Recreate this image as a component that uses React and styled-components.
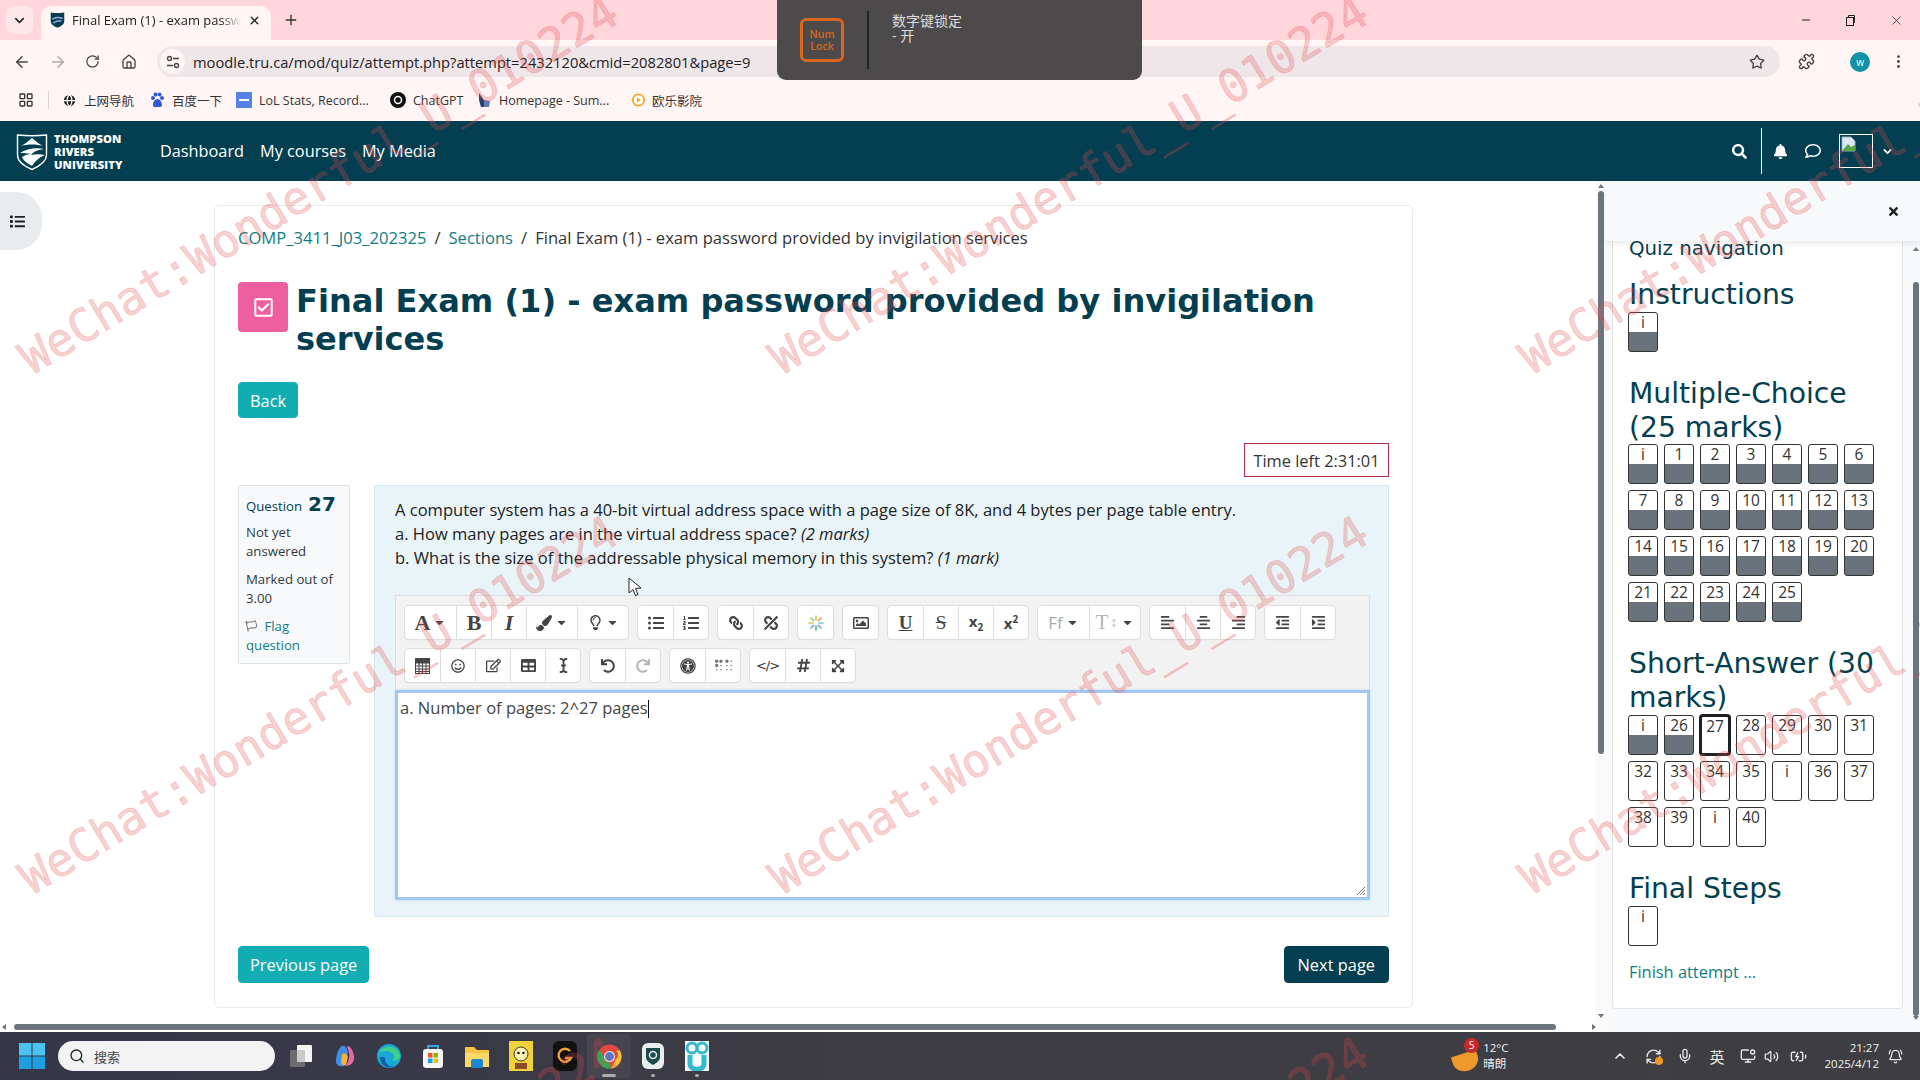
import React from 'react';
import styled, { createGlobalStyle } from 'styled-components';
import { ArrowLeft, ArrowRight, RotateCw, Home, Star, Puzzle, MoreVertical, Minus, X, Plus, ChevronDown, Search, Mic, Volume2, MonitorDot, ChevronUp, RefreshCw, BatteryCharging, BellRing, Globe, LayoutGrid } from 'lucide-react';
import { FaPaintBrush, FaRegLightbulb, FaListUl, FaListOl, FaLink, FaUnlink, FaRegImage, FaAlignLeft, FaAlignCenter, FaAlignRight, FaOutdent, FaIndent, FaRegSmile, FaRegEdit, FaTable, FaICursor, FaUndo, FaRedo, FaUniversalAccess, FaBraille, FaHashtag, FaExpandArrowsAlt, FaSearch, FaBell, FaRegComment, FaList, FaTimes, FaCaretDown, FaRegCheckSquare, FaRegFlag } from 'react-icons/fa';

const SANS = '"Open Sans", "Noto Sans CJK SC", sans-serif';
const VERDANA = '"DejaVu Sans", sans-serif';

const Global = createGlobalStyle`
  html, body { margin: 0; padding: 0; background: #fff; }
  * { box-sizing: border-box; }
  body { font-family: ${SANS}; color: #1d2125; }
`;

const Page = styled.div`
  position: relative; width: 1920px; height: 1080px; overflow: hidden;
  display: flex; flex-direction: column; background: #fff;
`;

/* browser chrome */
const TabStrip = styled.div`
  height: 40px; background: #ffd6dc; display: flex; align-items: flex-end; padding-left: 6px; flex: none;
`;
const TabList = styled.div`
  width: 27px; height: 28px; margin: 0 8px 6px 0; border-radius: 8px; background: #ffe6ea;
  display: flex; align-items: center; justify-content: center; color: #222;
`;
const Tab = styled.div`
  width: 230px; height: 34px; background: #fff5f5; border-radius: 10px 10px 0 0;
  display: flex; align-items: center; padding: 0 10px 6px 9px; gap: 7px;
`;
const TabTitle = styled.span`
  flex: 1; font-size: 13px; color: #222; white-space: nowrap; overflow: hidden;
  mask-image: linear-gradient(90deg, #000 88%, transparent);
`;
const NewTab = styled.div`
  margin: 0 0 12px 12px; color: #333; display: flex;
`;
const WindowControls = styled.div`
  margin-left: auto; display: flex; align-items: center; gap: 33px; padding-right: 16px; align-self: center; color: #222;
`;
const Toolbar = styled.div`
  height: 41px; background: #fff5f5; display: flex; align-items: center; padding: 2px 0 0 13px; flex: none; color: #444;
`;
const NavIcon = styled.span`
  display: flex; width: 36px; color: ${p => p.$muted ? '#aaa' : '#444'};
`;
const AddressBar = styled.div`
  margin-left: 0; width: 1623px; height: 31px; border-radius: 16px; background: #efe6ea;
  display: flex; align-items: center; padding-right: 15px; flex: none;
`;
const TuneChip = styled.span`
  width: 25px; height: 25px; margin: 0 8px 0 3px; border-radius: 50%; background: #fff5f5; display: flex; align-items: center; justify-content: center;
`;
const Url = styled.span`
  font-size: 14.7px; color: #222; flex: 1; white-space: nowrap;
`;
const ToolRight = styled.div`
  display: flex; align-items: center; padding-left: 18px; color: #444;
`;
const Avatar = styled.span`
  width: 20px; height: 20px; border-radius: 50%; background: #0e93a8; color: #fff; font-size: 10px; margin: 0 20px 0 35px;
  display: flex; align-items: center; justify-content: center;
`;
const Bookmarks = styled.div`
  height: 40px; background: #fff5f5; display: flex; align-items: center; padding: 0 0 2px 18px; font-size: 12.5px; color: #333; flex: none;
`;
const BmDivider = styled.span`
  width: 1px; height: 18px; background: #d8cfd2; margin: 0 13px 0 14px;
`;
const Bookmark = styled.span`
  display: flex; align-items: center; gap: 7px; width: ${p => p.$w}px; white-space: nowrap;
`;

/* site nav */
const Navbar = styled.div`
  height: 60px; background: #033f50; display: flex; align-items: center; padding-left: 16px; color: #fff; flex: none;
`;
const LogoBox = styled.div`
  display: flex; align-items: center; gap: 6px; width: 144px;
`;
const LogoText = styled.div`
  font-size: 11.2px; line-height: 13px; font-weight: 800; letter-spacing: .1px; color: #fff;
`;
const NavLink = styled.a`
  font-size: 16.3px; color: #fff; margin: 0 16px 0 0;
`;
const NavRight = styled.div`
  margin-left: auto; display: flex; align-items: center; height: 100%; padding-right: 26px;
`;
const NavSep = styled.span`
  width: 1px; height: 46px; background: #fff; margin: 0 11px 0 14px;
`;
const UserPic = styled.span`
  width: 34px; height: 34px; border: 1px solid #fff; margin: 0 8px 0 18px; display: block; padding: 1px;
`;

/* page body */
const Body = styled.div`
  flex: 1; display: flex; min-height: 0;
`;
const MainPane = styled.div`
  width: 1596px; flex: none; display: flex; flex-direction: column; position: relative;
`;
const Scroller = styled.div`
  flex: 1; padding: 24px 0 0 214px; min-height: 0;
`;
const DrawerToggle = styled.div`
  position: absolute; left: 0; top: 11px; width: 42px; height: 58px; background: #e9ecef;
  border-radius: 0 26px 26px 0; display: flex; align-items: center; justify-content: center; color: #1d2125; padding-right: 8px;
`;
const Card = styled.div`
  width: 1199px; height: 803px; border: 1px solid #e9ebee; border-radius: 5px; padding: 20px 23px;
`;
const Crumbs = styled.div`
  font-size: 16.6px; line-height: 24px; display: flex; gap: 8px; color: #333;
`;
const CrumbLink = styled.a`
  color: #0f7d82;
`;
const Heading = styled.div`
  display: flex; gap: 8px; margin-top: 32px;
`;
const ActivityIcon = styled.div`
  width: 50px; height: 50px; background: #ee5f9f; border-radius: 4px; color: #fff; flex: none;
  display: flex; align-items: center; justify-content: center;
`;
const Title = styled.h1`
  margin: 0; font: bold 32.1px/38px ${VERDANA}; color: #033f50; width: 1090px;
`;
const BackSpacer = styled.div`
  height: 24px;
`;
const TealButton = styled.button`
  background: ${p => p.$dark ? '#033f50' : '#11adb2'}; color: #fff; border: 1px solid ${p => p.$dark ? '#033f50' : '#11adb2'}; border-radius: 4px;
  font: 16.4px ${SANS}; height: ${p => p.$h}px; padding: 0 ${p => p.$dark ? 13 : 11}px; display: block;
`;
const TimerRow = styled.div`
  display: flex; justify-content: flex-end; margin-top: 25px;
`;
const Timer = styled.div`
  width: 145px; height: 34px; border: 1px solid #b3304c; font-size: 16.4px; display: flex; align-items: center; justify-content: center; color: #333;
`;
const QuestionRow = styled.div`
  display: flex; gap: 24px; margin-top: 8px; align-items: flex-start;
`;
const Info = styled.div`
  width: 112px; height: 179px; background: #f8f9fa; border: 1px solid #dee2e6; border-radius: 2px;
  padding: 6px 7px; font-size: 13.2px; color: #33393f;
`;
const InfoNo = styled.div`
  color: #033f50; display: flex; align-items: baseline; gap: 6px; height: 31px;
`;
const InfoNum = styled.b`
  font: bold 20px ${VERDANA};
`;
const InfoP = styled.div`
  line-height: 19px; margin-bottom: 9px; color: ${p => p.$link ? '#0f7d82' : 'inherit'};
`;
const FlagIcon = styled(FaRegFlag)`
  margin-right: 4px; color: #777; transform: rotate(-12deg);
`;
const QBox = styled.div`
  width: 1015px; height: 432px; background: #e8f4f8; border: 1px solid #d5e7eb; border-radius: 2px; padding: 12px 16px 0 20px;
`;
const QText = styled.div`
  font-size: 16.55px; line-height: 24px; color: #222; margin-bottom: 25px;
`;
const EditorWrap = styled.div`
  width: 975px;
`;
const EdToolbar = styled.div`
  height: 95px; background: #f2f2f2; border: 1px solid #ddd; border-bottom: 0; padding: 10px 9px 0; display: flex; flex-direction: column; gap: 10px;
`;
const EdRow = styled.div`
  display: flex; gap: 10px; height: 33px;
`;
const EdGroup = styled.div`
  display: flex; background: #fff; border-radius: 4px; box-shadow: 0 0 0 1px #ddd, 0 1px 1px #ccc;
`;
const EdBtn = styled.div`
  width: ${p => p.$w || 35}px; height: 33px; border-left: 1px solid #ddd; display: flex; align-items: center; justify-content: center; gap: 3px;
  color: ${p => p.$off ? '#b5b5b5' : '#444'}; font-size: 15px;
  &:first-child { border-left: 0; }
`;
const Mirror = styled.span`
  display: flex; transform: scaleX(-1);
`;
const Serif = styled.span`
  font: ${p => p.$it ? 'italic ' : ''}${p => p.$light ? '400' : 'bold'} ${p => p.$s || 20}px "Liberation Serif", serif;
  text-decoration: ${p => p.$deco || 'none'};
`;
const LightLabel = styled.span`
  font: 400 17px "Open Sans", sans-serif; color: #aaa;
`;
const Tiny = styled.span`
  font-size: 9px; margin-left: -2px;
`;
const Script = styled.span`
  font: bold 15px "Open Sans", sans-serif;
  sub, sup { font-size: 10px; }
`;
const CodeTag = styled.span`
  font: 400 13px "DejaVu Sans", sans-serif; letter-spacing: -1px; color: #333;
`;
const EditArea = styled.div`
  position: relative; height: 210px; background: #fff; border: 3px solid #a3c8f0; border-radius: 1px; box-shadow: 0 0 2px #a3c8f0; padding: 3px 2px;
  font-size: 16.55px; line-height: 24px; color: #444;
`;
const Caret = styled.span`
  display: inline-block; width: 1px; height: 18px; background: #111; vertical-align: -4px;
`;
const Grip = styled.svg`
  position: absolute; right: 1px; bottom: 1px;
`;
const Pager = styled.div`
  display: flex; justify-content: space-between; margin-top: 29px;
`;
const HScroll = styled.div`
  height: 12px; flex: none; position: relative; display: flex; align-items: flex-end; padding: 0 0 2px 2px;
`;
const HThumb = styled.div`
  width: 1542px; height: 6px; margin-left: 8px; background: #6c757d; border-radius: 3px;
`;
const Arrow = styled.span`
  width: 0; height: 0; flex: none; border: 3px solid transparent;
  ${p => p.$dir === 'l' && 'border-right: 4px solid #6c757d; border-left: 0;'}
  ${p => p.$dir === 'r' && 'border-left: 4px solid #6c757d; border-right: 0; margin-left: 36px;'}
  ${p => p.$dir === 'u' && 'border-bottom: 4px solid #6c757d; border-top: 0;'}
  ${p => p.$dir === 'd' && 'border-top: 4px solid #6c757d; border-bottom: 0;'}
`;
const VScroll = styled.div`
  width: 10px; flex: none; background: #fafafa; display: flex; flex-direction: column; align-items: center; padding: 3px 0 14px;
`;
const VThumb = styled.div`
  width: 6px; height: ${p => p.$h}px; margin-top: ${p => p.$t}px; background: #6c757d; border-radius: 3px;
`;
const Spacer = styled.div`
  flex: 1;
`;

/* drawer */
const Drawer = styled.div`
  flex: 1; background: #f8f9fa; display: flex; flex-direction: column; min-width: 0;
`;
const DrawerHead = styled.div`
  height: 60px; flex: none; background: #f8f9fa; box-shadow: 0 3px 6px rgba(0,0,0,.07); position: relative; z-index: 2;
  display: flex; align-items: flex-start; justify-content: flex-end; padding: 24px 20px 0 0; color: #1d2125;
`;
const DrawerBody = styled.div`
  flex: 1; display: flex; min-height: 0; padding-left: 6px;
`;
const NavCard = styled.div`
  width: 291px; height: 768px; flex: none; background: #fff; border: 1px solid #e1e4e8; border-top: 0; border-radius: 0 0 4px 4px; padding: 0 10px 0 16px; overflow: hidden;
`;
const NavCaption = styled.div`
  font: 19.8px/24px ${VERDANA}; color: #033f50; margin-top: -4px; margin-bottom: 17px;
`;
const SectionTitle = styled.h3`
  margin: 0; font: 400 28.2px/33.8px ${VERDANA}; color: #033f50;
`;
const QGrid = styled.div`
  display: grid; grid-template-columns: repeat(7, 30px); gap: 6px; margin: 0 0 25px -1px;
`;
const QCell = styled.div`
  width: 30px; height: 40px; border: ${p => p.$current ? '2px solid #1d2125' : '1px solid #333'}; border-radius: 3px; overflow: hidden;
  font: 15.5px/18px ${SANS}; text-align: center; color: #333; box-shadow: ${p => p.$current ? '0 0 0 1px #1d2125' : 'none'};
  background: ${p => p.$answered ? 'linear-gradient(#fff 19px, #6a737b 19px)' : '#fff'};
`;
const FinishLink = styled.a`
  display: block; font-size: 16.4px; line-height: 24px; color: #0f7d82; margin-top: -11px;
`;
const DrawerScroll = styled.div`
  width: 10px; margin-left: 8px; display: flex; flex-direction: column; align-items: center; padding: 6px 0 12px;
`;

/* taskbar */
const Taskbar = styled.div`
  height: 48px; flex: none; background: linear-gradient(90deg, #36364a, #3d3c44 45%, #3e3e42); display: flex; align-items: center; padding-left: 19px; color: #fff; position: relative;
`;
const SearchPill = styled.div`
  width: 217px; height: 30px; background: #f3f3f3; border-radius: 15px; margin: 0 0 0 13px; display: flex; align-items: center; gap: 9px; padding-left: 11px; font-size: 13px; color: #444;
`;
const AppSlot = styled.div`
  width: 44px; height: 44px; display: flex; flex-direction: column; align-items: center; justify-content: center; position: relative; border-radius: 4px;
  background: ${p => p.$active ? 'rgba(255,255,255,.06)' : 'transparent'};
`;
const AppDot = styled.span`
  position: absolute; bottom: 1px; width: ${p => p.$wide ? 14 : 4}px; height: 3px; border-radius: 2px; background: #aaa;
`;
const AppRow = styled.div`
  display: flex; margin-left: 4px;
`;
const Tray = styled.div`
  margin-left: auto; display: flex; align-items: center; height: 100%; padding-right: 17px;
`;
const Weather = styled.div`
  position: relative; display: flex; align-items: center; margin-right: 103px;
`;
const Moon = styled.span`
  display: block; width: 26px; height: 18px; background: #ee9a2a; border-radius: 0 0 20px 20px / 0 0 18px 18px; transform: rotate(-18deg); margin: 12px 4px 0 0;
`;
const Badge = styled.span`
  position: absolute; left: 11px; top: -2px; width: 15px; height: 15px; border-radius: 50%; background: #c62a2a; font-size: 10px; line-height: 15px; text-align: center; color: #fff;
`;
const Small = styled.div`
  font-size: 11.5px; line-height: 16px; color: #f0f0f0; text-align: ${p => p.$right ? 'right' : 'left'};
`;
const TrayIcon = styled.span`
  display: flex; margin: 0 ${p => p.$m}px 0 ${p => p.$l || 0}px; color: #e8e8e8; font-size: 15px; position: relative;
`;
const SyncDot = styled.span`
  position: absolute; right: -1px; bottom: 0; width: 8px; height: 8px; border-radius: 50%; background: #f2971e;
`;

/* overlays */
const NumLock = styled.div`
  position: absolute; left: 777px; top: 0; width: 365px; height: 80px; background: #4d4a4c; border-radius: 0 0 9px 9px; display: flex; z-index: 6;
`;
const LockKey = styled.div`
  width: 44px; height: 44px; margin: 18px 0 0 23px; border: 3px solid #d8671d; border-radius: 6px; color: #d8671d;
  font: 600 10.5px/12px ${SANS}; text-align: center; display: flex; align-items: center; justify-content: center;
`;
const LockRule = styled.div`
  width: 2px; height: 58px; background: #222; margin: 11px 0 0 23px;
`;
const LockText = styled.div`
  margin: 13px 0 0 23px; font-size: 14px; line-height: 15px; color: #ddd;
`;
const Cursor = styled.svg`
  position: absolute; left: 628px; top: 577px; z-index: 7;
`;
const Marks = styled.div`
  position: absolute; inset: 0; overflow: hidden; pointer-events: none; z-index: 8;
`;
const Mark = styled.span`
  position: absolute; left: ${p => p.$x}px; top: ${p => p.$y}px; transform-origin: 0 100%; transform: translateY(-100%) rotate(-31deg);
  font: 45.7px/1 "DejaVu Sans Mono", monospace; color: rgba(228, 72, 72, .25); -webkit-text-stroke: .8px rgba(228, 72, 72, .25); white-space: nowrap;
`;

const Sparkle = () => (
  <svg width="16" height="16" viewBox="0 0 16 16" strokeWidth="1.6" strokeLinecap="round">
    <path d="M8 1v4" stroke="#e8c547" /><path d="M8 11v4" stroke="#4caf8a" /><path d="M1 8h4" stroke="#e8c547" /><path d="M11 8h4" stroke="#66c6d6" />
    <path d="M3 3l2.6 2.6" stroke="#9ccc65" /><path d="M13 3l-2.6 2.6" stroke="#ef8f6a" /><path d="M3 13l2.6-2.6" stroke="#66b6d6" /><path d="M13 13l-2.6-2.6" stroke="#8c9eda" />
  </svg>
);

const CalendarGrid = () => (
  <svg width="15" height="16" viewBox="0 0 15 16" fill="none" stroke="#444"><rect x=".5" y=".5" width="14" height="15" /><rect x="1" y="1" width="13" height="4" fill="#444" /><path d="M.5 8h14M.5 11h14M.5 13.500h14M4 5v10M7.500 5v10M11 5v10" /></svg>
);

const row1 = [
  [{ w: 51, c: <><Serif $s={22}>A</Serif><FaCaretDown size={13} /></> }, { c: <Serif $s={22}>B</Serif> }, { c: <Serif $s={22} $it>I</Serif> }, { w: 51, c: <><FaPaintBrush size={16} /><FaCaretDown size={13} /></> }, { w: 51, c: <><FaRegLightbulb size={15} /><FaCaretDown size={13} /></> }],
  [{ c: <FaListUl size={16} /> }, { c: <FaListOl size={16} /> }],
  [{ c: <Mirror><FaLink size={14} /></Mirror> }, { c: <Mirror><FaUnlink size={14} /></Mirror> }],
  [{ c: <Sparkle /> }],
  [{ c: <FaRegImage size={16} /> }],
  [{ c: <Serif $s={19} $deco="underline">U</Serif> }, { c: <Serif $s={19} $light $deco="line-through">S</Serif> }, { c: <Script>x<sub>2</sub></Script> }, { c: <Script>x<sup>2</sup></Script> }],
  [{ w: 51, off: 1, c: <><LightLabel>Ff</LightLabel><FaCaretDown size={13} color="#444" /></> }, { w: 51, off: 1, c: <><Serif $s={21} $light>T</Serif><Tiny>↕</Tiny><FaCaretDown size={13} color="#444" /></> }],
  [{ c: <FaAlignLeft size={15} /> }, { c: <FaAlignCenter size={15} /> }, { c: <FaAlignRight size={15} /> }],
  [{ c: <FaOutdent size={15} /> }, { c: <FaIndent size={15} /> }],
];
const row2 = [
  [{ c: <CalendarGrid /> }, { c: <FaRegSmile size={14} /> }, { c: <FaRegEdit size={15} /> }, { c: <FaTable size={15} /> }, { c: <FaICursor size={15} /> }],
  [{ c: <FaUndo size={14} /> }, { off: 1, c: <FaRedo size={14} /> }],
  [{ c: <FaUniversalAccess size={16} /> }, { off: 1, c: <FaBraille size={17} color="#777" /> }],
  [{ c: <CodeTag>&lt;/&gt;</CodeTag> }, { c: <FaHashtag size={15} /> }, { c: <FaExpandArrowsAlt size={14} /> }],
];

const Groups = ({ data }) => (
  <EdRow>
    {data.map((g, i) => (
      <EdGroup key={i}>
        {g.map((b, j) => <EdBtn key={j} $w={b.w} $off={b.off}>{b.c}</EdBtn>)}
      </EdGroup>
    ))}
  </EdRow>
);

const range = (a, b) => Array.from({ length: b - a + 1 }, (_, i) => String(a + i));
const sec1 = ['i', ...range(1, 25)];
const sec2 = ['i', '26', '27', '28', '29', '30', '31', '32', '33', '34', '35', 'i', '36', '37', '38', '39', 'i', '40'];

const marks = [];
[382, 902, 1423].forEach(y => [36, 786, 1536].forEach(x => marks.push({ x, y })));

const Shield = ({ size = 15, fill = '#033f50' }) => (
  <svg width={size} height={size * 1.15} viewBox="0 0 20 23"><path d="M1 2c6 1 12 1 18 0v12c0 4-5 7-9 8-4-1-9-4-9-8z" fill={fill} /><path d="M3 11c4-3 9-3 14-1M4 16c3-2 6-3 11-3" stroke="#9ad" strokeWidth="2" fill="none" /></svg>
);

const Logo = () => (
  <svg width="32" height="40" viewBox="0 0 32 40" fill="none">
    <path d="M1.5 4c9 1 20 1 29 0v20c0 7-9 12-14.5 14.5C10 36 1.5 31 1.5 24z" stroke="#fff" strokeWidth="1.4" />
    <path d="M5 15l5-3 6-5 6 5 5 3c-6-2-16-2-22 0z" fill="#fff" />
    <path d="M4 22c6-4 16-6 24-4-7 1-11 3-13 6 4-1 9-1 14 0-5 2-9 5-13 11-3-2-8-4-10-9 3-2 6-3 9-3-3-1-8-1-11-1z" fill="#fff" />
  </svg>
);

const BrokenImage = () => (
  <svg width="16" height="17" viewBox="0 0 16 17"><path d="M1 1h9l4 4v10H1z" fill="#dfe8f2" stroke="#9ab" /><path d="M1 15l6-7 3 3 4-2v6z" fill="#5aa64a" /></svg>
);

const Key = () => (
  <svg width="14" height="14" viewBox="0 0 14 14" fill="none" stroke="#444" strokeWidth="1.4"><circle cx="3.5" cy="3.5" r="2" /><path d="M7 3.5h6M1 10.5h6" /><circle cx="10.5" cy="10.5" r="2" /></svg>
);

const apps = [
  <svg key="a" width="24" height="24" viewBox="0 0 24 24"><rect x="8" y="1" width="15" height="17" fill="#f4f4f4" rx="1" /><rect x="1" y="6" width="15" height="17" fill="#6d6d6d" rx="1" /><rect x="8" y="6" width="8" height="12" fill="#c9c9c9" /></svg>,
  <svg key="b" width="24" height="24" viewBox="0 0 24 24"><path d="M9 2c4-1 5 3 6 7l-4 13c-5 1-8-1-8-5 0-6 3-14 6-15z" fill="#3f8ee8" /><path d="M14 2c4 0 6 5 7 10 1 6-3 10-9 10 3-2 5-9 4-13z" fill="#e86aa6" /><path d="M9 10c3-2 5 0 6 3l-2 8c-3 1-5-1-5-3z" fill="#f2b23b" /></svg>,
  <svg key="c" width="24" height="26" viewBox="0 0 24 26"><circle cx="12" cy="13" r="12" fill="#1aa7d8" /><path d="M2 10C5 2 20 1 23 12c1 5-5 7-8 5 3-1 3-5 0-7-5-3-10-2-13 0z" fill="#3fd08a" /><path d="M8 14c-1 6 4 11 10 9-7 4-15-1-15-9z" fill="#0b5fa8" /></svg>,
  <svg key="d" width="22" height="26" viewBox="0 0 22 26"><path d="M6 7V3h10v4" stroke="#2ea7e0" strokeWidth="2" fill="none" /><rect x="1" y="6" width="20" height="19" rx="3" fill="#f5f5f5" /><rect x="6" y="10" width="4.5" height="4.5" fill="#f25022" /><rect x="11.5" y="10" width="4.5" height="4.5" fill="#7fba00" /><rect x="6" y="15.5" width="4.5" height="4.5" fill="#00a4ef" /><rect x="11.5" y="15.5" width="4.5" height="4.5" fill="#ffb900" /></svg>,
  <svg key="e" width="26" height="26" viewBox="0 0 26 26"><path d="M1 4h9l3 3h12v17H1z" fill="#f6c544" /><path d="M1 10h24v14H1z" fill="#fbd968" /><rect x="7" y="16" width="12" height="9" rx="2" fill="#1d86d0" /></svg>,
  <svg key="f" width="24" height="30" viewBox="0 0 24 30"><rect width="24" height="30" fill="#f2d23a" /><circle cx="12" cy="13" r="7" fill="#fff4b0" stroke="#333" /><circle cx="9.5" cy="12" r="1.2" /><circle cx="14.5" cy="12" r="1.2" /><rect x="6" y="22" width="12" height="6" fill="#8a4a2a" /></svg>,
  <svg key="g" width="24" height="30" viewBox="0 0 24 30"><rect width="24" height="30" rx="6" fill="#111" /><path d="M17 10a6.5 6.5 0 1 0 1 7h-6" stroke="#f2a03a" strokeWidth="2.4" fill="none" /></svg>,
  <svg key="h" width="25" height="25" viewBox="0 0 25 25"><circle cx="12.5" cy="12.5" r="12" fill="#e2483b" /><path d="M22.9 6.5a12 12 0 0 1-9 18l5-9a6 6 0 0 0 0-9z" fill="#f6c33b" /><path d="M13.900 24.500A12 12 0 0 1 2.600 5.500l5 9a6 6 0 0 0 5 3.500z" fill="#34a853" /><circle cx="12.500" cy="12.500" r="5.500" fill="#fff" /><circle cx="12.500" cy="12.500" r="4.400" fill="#3b82e8" /></svg>,
  <svg key="i" width="22" height="26" viewBox="0 0 22 26"><rect width="22" height="26" rx="6" fill="#e8efee" /><path d="M4 5h14v9c0 4-4 6-7 8-3-2-7-4-7-8z" fill="#1f4a4a" /><circle cx="11" cy="12" r="3.500" fill="none" stroke="#e8efee" strokeWidth="1.500" /></svg>,
  <svg key="j" width="24" height="30" viewBox="0 0 24 30"><rect width="24" height="30" fill="#f5fbfc" /><circle cx="7" cy="7" r="5" fill="none" stroke="#35b9cd" strokeWidth="3" /><circle cx="17" cy="7" r="5" fill="none" stroke="#35b9cd" strokeWidth="3" /><path d="M5 14v9c0 7 14 7 14 0v-9" fill="none" stroke="#35b9cd" strokeWidth="5" /></svg>,
];

export default function App() {
  return (
    <>
      <Global />
      <Page>
        <TabStrip>
          <TabList><ChevronDown size={15} strokeWidth={2.5} /></TabList>
          <Tab>
            <Shield />
            <TabTitle>Final Exam (1) - exam passwo</TabTitle>
            <X size={13} strokeWidth={2.5} />
          </Tab>
          <NewTab><Plus size={16} strokeWidth={2} /></NewTab>
          <WindowControls>
            <Minus size={12} />
            <svg width="11" height="11" viewBox="0 0 11 11" fill="none" stroke="#222"><rect x="1.500" y="2.500" width="7" height="8" /><path d="M3.500 2.500v-2h6v7h-1" /></svg>
            <X size={15} strokeWidth={1.2} />
          </WindowControls>
        </TabStrip>
        <Toolbar>
          <NavIcon><ArrowLeft size={18} /></NavIcon>
          <NavIcon $muted><ArrowRight size={18} /></NavIcon>
          <NavIcon><RotateCw size={15} /></NavIcon>
          <NavIcon><Home size={16} /></NavIcon>
          <AddressBar>
            <TuneChip><Key /></TuneChip>
            <Url>moodle.tru.ca/mod/quiz/attempt.php?attempt=2432120&amp;cmid=2082801&amp;page=9</Url>
            <Star size={16} />
          </AddressBar>
          <ToolRight>
            <Puzzle size={17} />
            <Avatar>w</Avatar>
            <MoreVertical size={17} />
          </ToolRight>
        </Toolbar>
        <Bookmarks>
          <LayoutGrid size={16} />
          <BmDivider />
          <Bookmark $w={88}><Globe size={15} fill="#222" color="#fff5f5" />上网导航</Bookmark>
          <Bookmark $w={86}><svg width="15" height="16" viewBox="0 0 15 16" fill="#3558d8"><circle cx="3" cy="6" r="2" /><circle cx="12" cy="6" r="2" /><circle cx="5.500" cy="2.500" r="2" /><circle cx="9.500" cy="2.500" r="2" /><path d="M7.500 7c-3 0-5 4-4.500 6.500S6 15 7.500 15s4 .5 4.500-1.500S10.500 7 7.500 7z" /></svg>百度一下</Bookmark>
          <Bookmark $w={154}><svg width="16" height="16"><rect width="16" height="16" fill="#5383e8" /><rect x="3" y="7" width="10" height="2" fill="#fff" /></svg>LoL Stats, Record...</Bookmark>
          <Bookmark $w={87}><svg width="16" height="16" viewBox="0 0 16 16"><circle cx="8" cy="8" r="8" fill="#111" /><circle cx="8" cy="8" r="3.500" fill="none" stroke="#fff" strokeWidth="1.500" /></svg>ChatGPT</Bookmark>
          <Bookmark $w={155}><svg width="15" height="16" viewBox="0 0 15 16"><path d="M2 1l5 7v7H4l-2-7z" fill="#2a3f6a" /><path d="M7 8l6 1-1 6H7z" fill="#5b7bb5" /></svg>Homepage - Sum...</Bookmark>
          <Bookmark $w={70}><svg width="16" height="16" viewBox="0 0 16 16"><circle cx="8" cy="8" r="7" fill="#fff" stroke="#f0a81e" strokeWidth="2" /><path d="M6 5l5 3-5 3z" fill="#f0a81e" /></svg>欧乐影院</Bookmark>
        </Bookmarks>
        <Navbar>
          <LogoBox>
            <Logo />
            <LogoText>THOMPSON<br />RIVERS<br />UNIVERSITY</LogoText>
          </LogoBox>
          <NavLink>Dashboard</NavLink>
          <NavLink>My courses</NavLink>
          <NavLink>My Media</NavLink>
          <NavRight>
            <FaSearch size={15} />
            <NavSep />
            <FaBell size={15} />
            <FaRegComment size={16} style={{ marginLeft: 17 }} />
            <UserPic><BrokenImage /></UserPic>
            <ChevronDown size={13} strokeWidth={3} />
          </NavRight>
        </Navbar>
        <Body>
          <MainPane>
            <DrawerToggle><FaList size={15} /></DrawerToggle>
            <Scroller>
              <Card>
                <Crumbs>
                  <CrumbLink>COMP_3411_J03_202325</CrumbLink><span>/</span>
                  <CrumbLink>Sections</CrumbLink><span>/</span>
                  <span>Final Exam (1) - exam password provided by invigilation services</span>
                </Crumbs>
                <Heading>
                  <ActivityIcon><FaRegCheckSquare size={21} /></ActivityIcon>
                  <Title>Final Exam (1) - exam password provided by invigilation services</Title>
                </Heading>
                <BackSpacer />
                <TealButton $h={36}>Back</TealButton>
                <TimerRow><Timer>Time left 2:31:01</Timer></TimerRow>
                <QuestionRow>
                  <Info>
                    <InfoNo>Question <InfoNum>27</InfoNum></InfoNo>
                    <InfoP>Not yet<br />answered</InfoP>
                    <InfoP>Marked out of<br />3.00</InfoP>
                    <InfoP $link><FlagIcon size={11} /> Flag<br />question</InfoP>
                  </Info>
                  <QBox>
                    <QText>
                      A computer system has a 40-bit virtual address space with a page size of 8K, and 4 bytes per page table entry.<br />
                      a. How many pages are in the virtual address space? <i>(2 marks)</i><br />
                      b. What is the size of the addressable physical memory in this system? <i>(1 mark)</i>
                    </QText>
                    <EditorWrap>
                      <EdToolbar>
                        <Groups data={row1} />
                        <Groups data={row2} />
                      </EdToolbar>
                      <EditArea>
                        a. Number of pages: 2^27 pages<Caret />
                        <Grip width="10" height="10" viewBox="0 0 10 10" stroke="#777"><path d="M9 1L1 9M9 4L4 9M9 7L7 9" /></Grip>
                      </EditArea>
                    </EditorWrap>
                  </QBox>
                </QuestionRow>
                <Pager>
                  <TealButton $h={37}>Previous page</TealButton>
                  <TealButton $h={37} $dark>Next page</TealButton>
                </Pager>
              </Card>
            </Scroller>
            <HScroll>
              <Arrow $dir="l" />
              <HThumb />
              <Arrow $dir="r" />
            </HScroll>
          </MainPane>
          <VScroll>
            <Arrow $dir="u" />
            <VThumb $t={3} $h={563} />
            <Spacer />
            <Arrow $dir="d" />
          </VScroll>
          <Drawer>
            <DrawerHead><FaTimes size={13} /></DrawerHead>
            <DrawerBody>
              <NavCard>
                <NavCaption>Quiz navigation</NavCaption>
                <SectionTitle>Instructions</SectionTitle>
                <QGrid><QCell $answered>i</QCell></QGrid>
                <SectionTitle>Multiple-Choice (25 marks)</SectionTitle>
                <QGrid>{sec1.map((t, i) => <QCell key={i} $answered>{t}</QCell>)}</QGrid>
                <SectionTitle>Short-Answer (30 marks)</SectionTitle>
                <QGrid>{sec2.map((t, i) => <QCell key={i} $answered={i < 2} $current={t === '27'}>{t}</QCell>)}</QGrid>
                <SectionTitle>Final Steps</SectionTitle>
                <QGrid><QCell>i</QCell></QGrid>
                <FinishLink>Finish attempt ...</FinishLink>
              </NavCard>
              <DrawerScroll>
                <Arrow $dir="u" />
                <VThumb $t={31} $h={740} />
                <Spacer />
                <Arrow $dir="d" />
              </DrawerScroll>
            </DrawerBody>
          </Drawer>
        </Body>
        <Taskbar>
          <svg width="26" height="26" viewBox="0 0 26 26"><rect width="12.500" height="12.500" fill="#4cc2f1" /><rect x="13.500" width="12.500" height="12.500" fill="#4cc2f1" /><rect y="13.500" width="12.500" height="12.500" fill="#1e9fe0" /><rect x="13.500" y="13.500" width="12.500" height="12.500" fill="#1e9fe0" /></svg>
          <SearchPill><Search size={16} color="#222" />搜索</SearchPill>
          <AppRow>
            {apps.map((a, i) => (
              <AppSlot key={i} $active={i === 7}>
                {a}
                {i === 7 && <AppDot $wide />}
                {i > 7 && <AppDot />}
              </AppSlot>
            ))}
          </AppRow>
          <Tray>
            <Weather>
              <Moon />
              <Badge>5</Badge>
              <Small>12°C<br />晴朗</Small>
            </Weather>
            <TrayIcon $m={17}><ChevronUp size={16} strokeWidth={2.5} /></TrayIcon>
            <TrayIcon $m={15}><RefreshCw size={17} /><SyncDot /></TrayIcon>
            <TrayIcon $m={17}><Mic size={16} /></TrayIcon>
            <TrayIcon $m={15}>英</TrayIcon>
            <TrayIcon $m={8}><MonitorDot size={16} /></TrayIcon>
            <TrayIcon $m={11}><Volume2 size={15} /></TrayIcon>
            <TrayIcon $m={18}><BatteryCharging size={17} /></TrayIcon>
            <Small $right>21:27<br />2025/4/12</Small>
            <TrayIcon $m={0} $l={9}><BellRing size={15} /></TrayIcon>
          </Tray>
        </Taskbar>
        <NumLock>
          <LockKey>Num<br />Lock</LockKey>
          <LockRule />
          <LockText>数字键锁定<br />- 开</LockText>
        </NumLock>
        <Cursor width="14" height="20" viewBox="0 0 14 20"><path d="M1 1v15l4-3.500 2.500 6 2.500-1-2.500-6 5.500-.5z" fill="#fff" stroke="#222" strokeWidth="1" /></Cursor>
        <Marks>
          {marks.map((m, i) => <Mark key={i} $x={m.x} $y={m.y}>WeChat:Wonderful_U_010224</Mark>)}
        </Marks>
      </Page>
    </>
  );
}
